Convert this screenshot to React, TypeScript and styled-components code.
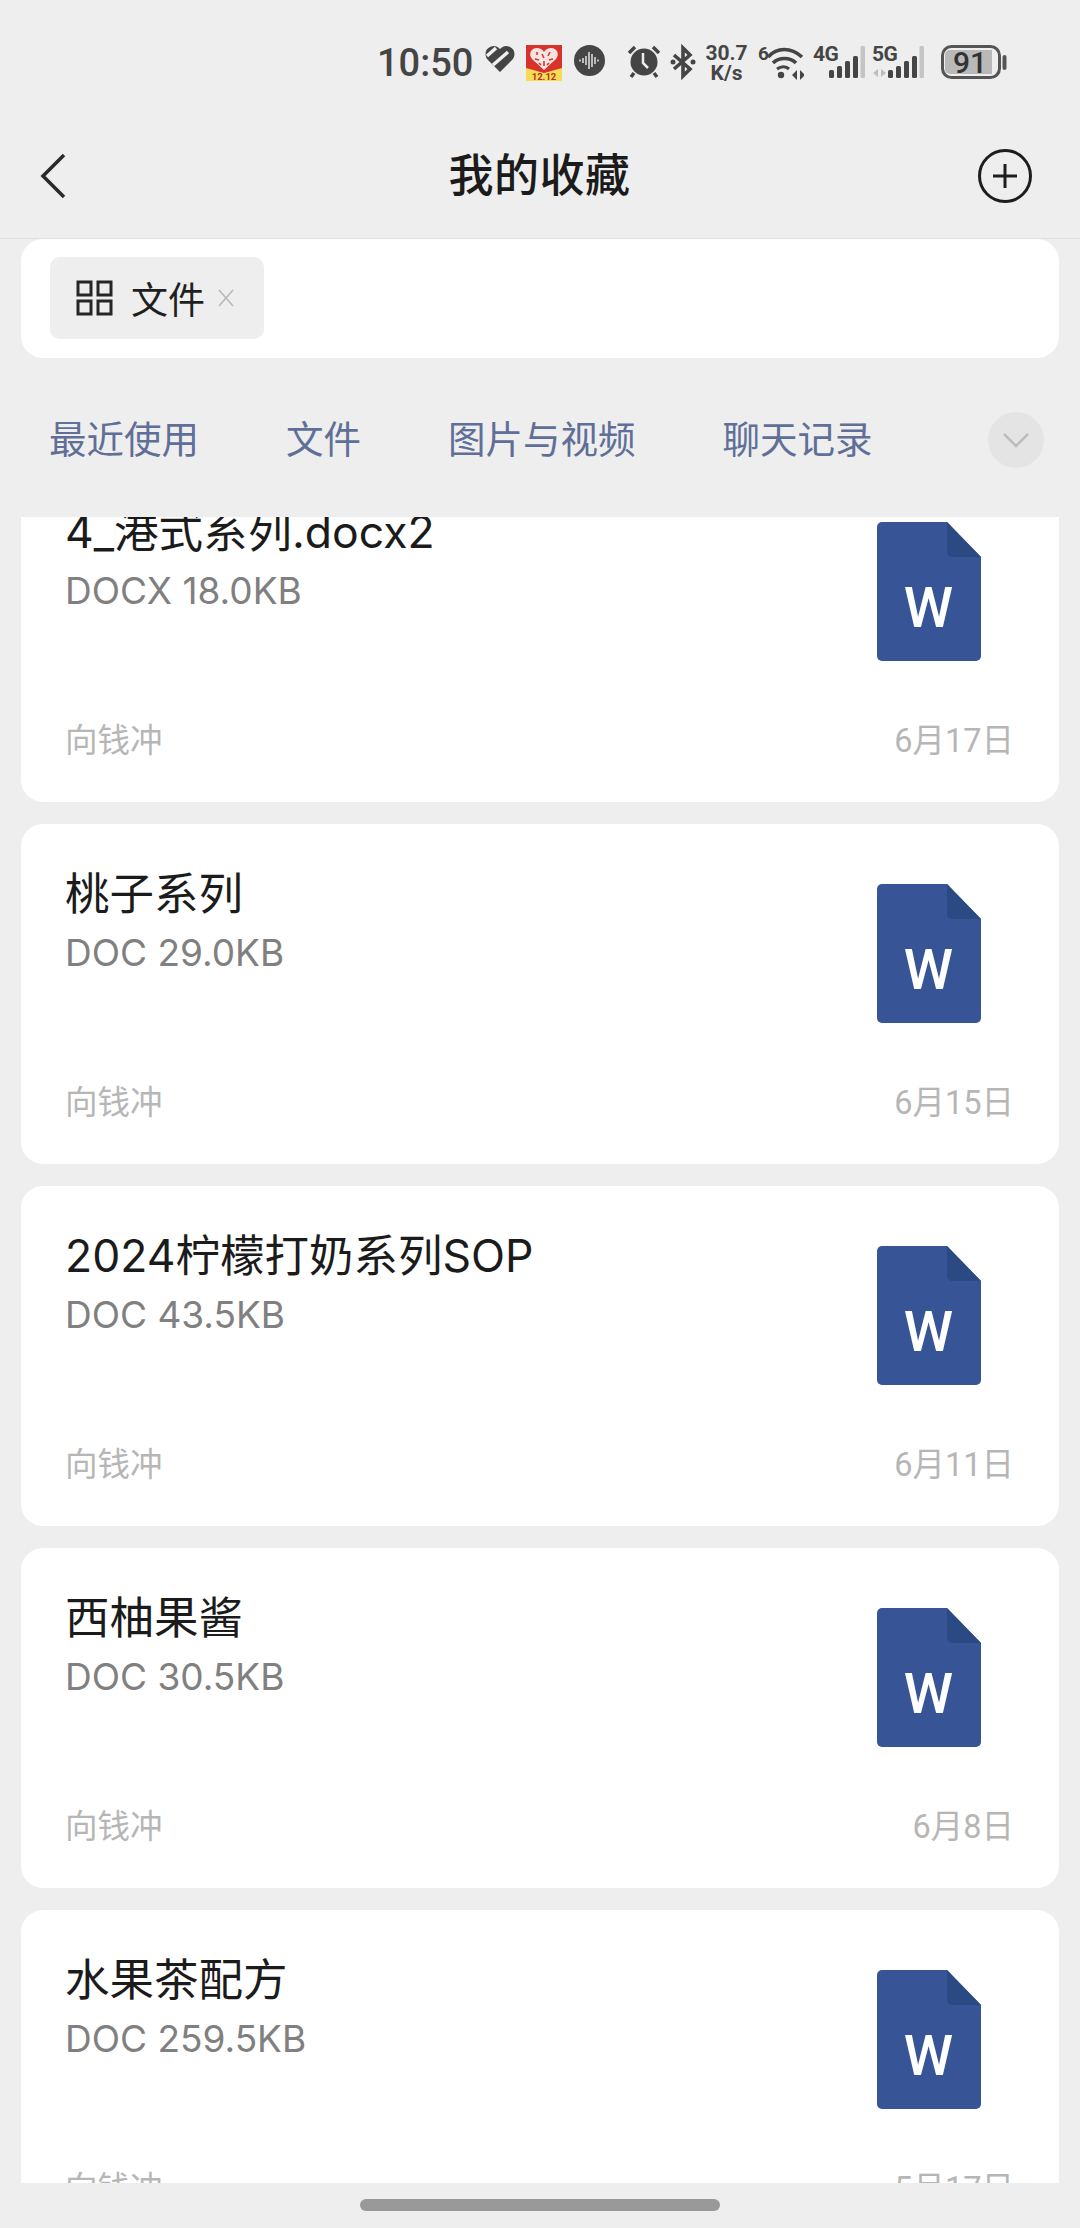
import styled, { createGlobalStyle } from 'styled-components';
import type { ReactNode } from 'react';

const GlobalStyle = createGlobalStyle`
  html, body {
    margin: 0;
    padding: 0;
    background: #eeeeee;
  }
  * {
    box-sizing: border-box;
  }
`;

const FONT = `Roboto, "Noto Sans CJK SC", sans-serif`;
const LIST_FONT = `Inter, "Noto Sans CJK SC", sans-serif`;
const STATUS_INK = '#454545';

const Page = styled.div`
  width: 1080px;
  height: 2228px;
  background: #eeeeee;
  display: flex;
  flex-direction: column;
  overflow: hidden;
  font-family: ${FONT};
`;

const StatusBar = styled.div`
  height: 126px;
  padding: 45px 0 0 377px;
  display: flex;
  align-items: flex-start;
  color: ${STATUS_INK};
`;

const Clock = styled.span`
  width: 97px;
  height: 36px;
  font-size: 38px;
  font-weight: 500;
  line-height: 36px;
  white-space: nowrap;
`;

const Slot = styled.div<{ $left: number }>`
  margin-left: ${props => props.$left}px;
  display: flex;
  flex-shrink: 0;
`;

const StatusSvg = styled.svg`
  margin: -9px 0;
  flex-shrink: 0;
`;

const Speed = styled.div`
  width: 47px;
  margin: -2px 0 0 7px;
  display: flex;
  flex-direction: column;
  align-items: center;
  font-size: 21px;
  font-weight: 700;
  line-height: 20px;
`;

const NavBar = styled.div`
  height: 113px;
  padding: 0 48px 12px 40px;
  display: grid;
  grid-template-columns: 1fr auto 1fr;
  align-items: center;
  border-bottom: 1px solid #e0e0e0;
`;

const NavTitle = styled.h1`
  margin: 0 0 8px 7px;
  font-size: 45px;
  font-weight: 500;
  color: #1b1b1b;
  letter-spacing: 0.5px;
`;

const IconButton = styled.div<{ $end?: boolean }>`
  display: flex;
  justify-content: ${props => (props.$end ? 'flex-end' : 'flex-start')};
`;

const FilterCard = styled.div`
  height: 119px;
  margin: 0 21px;
  padding: 18px 29px;
  background: #ffffff;
  border-radius: 22px;
`;

const Chip = styled.div`
  width: 214px;
  height: 82px;
  padding-left: 26px;
  display: flex;
  align-items: center;
  background: #eeeeee;
  border-radius: 10px;
  color: #1f1f1f;
  font-size: 37px;
`;

const ChipText = styled.span`
  margin-left: 18px;
  margin-right: 13px;
`;

const Tabs = styled.div`
  height: 159px;
  padding: 0 36px 0 49px;
  display: flex;
  align-items: center;
`;

const Tab = styled.span`
  margin: 0 87px 3px 0;
  font-size: 37.5px;
  color: #5f6f98;
  white-space: nowrap;
`;

const MoreButton = styled.div`
  width: 56px;
  height: 56px;
  margin: 5px 0 0 auto;
  border-radius: 50%;
  background: #e4e4e4;
  display: flex;
  align-items: center;
  justify-content: center;
`;

const List = styled.div`
  flex: 1;
  min-height: 0;
  overflow: hidden;
  display: flex;
  flex-direction: column;
  gap: 22px;
  padding: 0 21px;
  font-family: ${LIST_FONT};
`;

const Card = styled.div`
  flex-shrink: 0;
  height: 340px;
  padding: 40px 45px 43px 44px;
  display: flex;
  flex-direction: column;
  background: #ffffff;
  border-radius: 22px;

  &:first-child {
    margin-top: -55px;
  }
`;

const CardTop = styled.div`
  display: flex;
  justify-content: space-between;
  align-items: flex-start;
`;

const CardName = styled.div`
  font-size: 44.5px;
  line-height: 60px;
  color: #1b1b1b;
  white-space: nowrap;
`;

const CardSize = styled.div`
  font-size: 37px;
  line-height: 50px;
  margin-top: 4px;
  color: #808080;
`;

const DocIcon = styled.div`
  margin: 20px 33px 0 0;
  display: flex;
`;

const CardFooter = styled.div`
  margin-top: auto;
  height: 44px;
  display: flex;
  align-items: center;
  justify-content: space-between;
  font-family: ${FONT};
  font-size: 32.5px;
  color: #b6b6b6;
`;

const BottomBar = styled.div`
  height: 45px;
  display: flex;
  justify-content: center;
  padding-top: 16px;
`;

const HomePill = styled.div`
  width: 360px;
  height: 12px;
  border-radius: 6px;
  background: #999999;
`;

const StatusGlyph = ({ w, h, children }: { w: number; h: number; children: ReactNode }) => (
  <StatusSvg width={w} height={h + 18} viewBox={`0 -9 ${w} ${h + 18}`}>
    {children}
  </StatusSvg>
);

const HeartIcon = () => (
  <StatusGlyph w={30} h={28}>
    <path d="M15 27 3 15C-1 11 0 4 5 2c4-2 7-1 10 2 3-3 6-4 10-2 5 2 6 9 2 13z" fill={STATUS_INK} />
    <path d="M2 11 11 3M8 20 23 7" stroke="#eeeeee" strokeWidth="3.5" fill="none" />
  </StatusGlyph>
);

const PromoIcon = () => (
  <StatusGlyph w={36} h={36}>
    <rect width="36" height="36" fill="#f6dc55" />
    <path d="M0 0h36v23L18 28 0 23z" fill="#d8322c" />
    <path d="M18 25 6 14C2 9 5 3 11 3c3 0 5 1 7 4 2-3 4-4 7-4 6 0 9 6 5 11z" fill="#f7e4e0" />
    <path d="M11 7v3M16 9l2 4M24 7l-2 4M9 14l4 1M27 14l-4 1M18 16v5M13 18l2 2M23 18l-2 2" stroke="#d8322c" strokeWidth="1.6" />
    <text x="18" y="35" textAnchor="middle" fontSize="9.5" fontWeight="700" fontFamily="Roboto, sans-serif" fill="#b5301f">12.12</text>
  </StatusGlyph>
);

const VoiceIcon = () => (
  <StatusGlyph w={31} h={31}>
    <circle cx="15.5" cy="15.5" r="15.5" fill={STATUS_INK} />
    <path d="M6 14.5v2M9 13v5M12 11v9M15 7v17M18 9v13M21 12v7M24 14.5v2" stroke="#eeeeee" strokeWidth="1.4" />
  </StatusGlyph>
);

const AlarmIcon = () => (
  <StatusGlyph w={34} h={33}>
    <circle cx="17" cy="17" r="13.5" fill={STATUS_INK} />
    <path d="M2 8 8 2M32 8 26 2M7 28l-3 4M27 28l3 4" stroke={STATUS_INK} strokeWidth="3.5" fill="none" />
    <path d="M16 8v10l5 5" stroke="#eeeeee" strokeWidth="2.5" fill="none" />
  </StatusGlyph>
);

const BluetoothIcon = () => (
  <StatusGlyph w={26} h={34}>
    <path d="M4 10 20 24 13 31V3l7 7L4 24" stroke={STATUS_INK} strokeWidth="3.6" fill="none" />
    <circle cx="3" cy="17" r="2.5" fill={STATUS_INK} />
    <circle cx="23" cy="17" r="2.5" fill={STATUS_INK} />
  </StatusGlyph>
);

const WifiIcon = () => (
  <StatusGlyph w={46} h={34}>
    <text x="0" y="15" fontSize="19" fontWeight="700" fontFamily="Roboto, sans-serif" fill={STATUS_INK}>6</text>
    <path d="M10 12C19 2 33 2 44 12M15 18c6-6 17-6 23 0" stroke={STATUS_INK} strokeWidth="3.6" fill="none" />
    <path d="M19 24c4-3 9-3 12 0" stroke={STATUS_INK} strokeWidth="3.2" fill="none" />
    <circle cx="23" cy="30" r="3.2" fill={STATUS_INK} />
    <path d="M34 30l5-5v10zM42 25l5 5-5 5z" fill={STATUS_INK} />
  </StatusGlyph>
);

const SignalIcon = ({ label, arrows }: { label: string; arrows?: boolean }) => (
  <StatusGlyph w={53} h={34}>
    <text x="0" y="16" fontSize="21" fontWeight="700" fontFamily="Roboto, sans-serif" letterSpacing="-0.5" fill={STATUS_INK}>{label}</text>
    {arrows && <path d="M1 28l5-4v8zM9 24l5 4-5 4z" fill="#bdbdbd" />}
    <rect x="16" y="25" width="5" height="8" rx="1.5" fill={STATUS_INK} />
    <rect x="24" y="21" width="5" height="12" rx="1.5" fill={STATUS_INK} />
    <rect x="32" y="16" width="5" height="17" rx="1.5" fill={STATUS_INK} />
    <rect x="40" y="11" width="5" height="22" rx="1.5" fill={STATUS_INK} />
    <rect x="47.5" y="1" width="4.5" height="32" rx="1.5" fill="#c4c4c4" />
  </StatusGlyph>
);

const BatteryIcon = () => (
  <StatusGlyph w={66} h={34}>
    <rect x="1.5" y="1.5" width="57" height="31" rx="9" fill="none" stroke="#555555" strokeWidth="3" />
    <path d="M9 5h42v24H9a5 5 0 0 1-5-5V10a5 5 0 0 1 5-5z" fill="#b9b9b9" />
    <text x="29" y="28" textAnchor="middle" fontSize="30" fontWeight="500" fontFamily="Roboto, sans-serif" fill="#333333">91</text>
    <rect x="61.5" y="10" width="4" height="15" rx="2" fill="#555555" />
  </StatusGlyph>
);

const BackIcon = () => (
  <svg width="26" height="46" viewBox="0 0 26 46">
    <path d="M24 2 3 23l21 21" stroke="#2a2a2a" strokeWidth="3.5" fill="none" />
  </svg>
);

const PlusIcon = () => (
  <svg width="54" height="54" viewBox="0 0 54 54">
    <circle cx="27" cy="27" r="25.5" stroke="#1d1d1d" strokeWidth="3" fill="none" />
    <path d="M27 15v24M15 27h24" stroke="#1d1d1d" strokeWidth="3" fill="none" />
  </svg>
);

const GridIcon = () => (
  <svg width="37" height="36" viewBox="0 0 37 36">
    <path d="M2 2h13v13H2zM22 2h13v13H22zM2 21h13v13H2zM22 21h13v13H22z" stroke="#262626" strokeWidth="3" fill="none" />
  </svg>
);

const CloseIcon = () => (
  <svg width="16" height="18" viewBox="0 0 16 18">
    <path d="M1 1l14 16M15 1 1 17" stroke="#b8b8b8" strokeWidth="1.6" fill="none" />
  </svg>
);

const ChevronDownIcon = () => (
  <svg width="28" height="16" viewBox="0 0 28 16">
    <path d="M2 2l12 12L26 2" stroke="#bdbdbd" strokeWidth="2.5" fill="none" />
  </svg>
);

const WordIcon = () => (
  <svg width="104" height="139" viewBox="0 0 104 139">
    <path d="M5 0h65l34 35v99a5 5 0 0 1-5 5H5a5 5 0 0 1-5-5V5a5 5 0 0 1 5-5z" fill="#375596" />
    <path d="M70 0l34 35H75a5 5 0 0 1-5-5z" fill="#2b4a83" />
    <text x="51.5" y="105" textAnchor="middle" fontSize="56" fontWeight="500" fontFamily="Roboto, sans-serif" fill="#ffffff">W</text>
  </svg>
);

const files = [
  { name: '4_港式系列.docx2', size: 'DOCX 18.0KB', date: '6月17日' },
  { name: '桃子系列', size: 'DOC 29.0KB', date: '6月15日' },
  { name: '2024柠檬打奶系列SOP', size: 'DOC 43.5KB', date: '6月11日' },
  { name: '西柚果酱', size: 'DOC 30.5KB', date: '6月8日' },
  { name: '水果茶配方', size: 'DOC 259.5KB', date: '5月17日' },
];

const tabs = ['最近使用', '文件', '图片与视频', '聊天记录'];

const App = () => {
  return (
    <>
      <GlobalStyle />
      <Page>
        <StatusBar>
          <Clock>10:50</Clock>
          <Slot $left={11}><HeartIcon /></Slot>
          <Slot $left={11}><PromoIcon /></Slot>
          <Slot $left={12}><VoiceIcon /></Slot>
          <Slot $left={22}><AlarmIcon /></Slot>
          <Slot $left={9}><BluetoothIcon /></Slot>
          <Speed>
            <span>30.7</span>
            <span>K/s</span>
          </Speed>
          <Slot $left={8}><WifiIcon /></Slot>
          <Slot $left={9}><SignalIcon label="4G" /></Slot>
          <Slot $left={6}><SignalIcon label="5G" arrows /></Slot>
          <Slot $left={16}><BatteryIcon /></Slot>
        </StatusBar>
        <NavBar>
          <IconButton><BackIcon /></IconButton>
          <NavTitle>我的收藏</NavTitle>
          <IconButton $end><PlusIcon /></IconButton>
        </NavBar>
        <FilterCard>
          <Chip>
            <GridIcon />
            <ChipText>文件</ChipText>
            <CloseIcon />
          </Chip>
        </FilterCard>
        <Tabs>
          {tabs.map(tab => <Tab key={tab}>{tab}</Tab>)}
          <MoreButton><ChevronDownIcon /></MoreButton>
        </Tabs>
        <List>
          {files.map(file => (
            <Card key={file.name}>
              <CardTop>
                <div>
                  <CardName>{file.name}</CardName>
                  <CardSize>{file.size}</CardSize>
                </div>
                <DocIcon><WordIcon /></DocIcon>
              </CardTop>
              <CardFooter>
                <span>向钱冲</span>
                <span>{file.date}</span>
              </CardFooter>
            </Card>
          ))}
        </List>
        <BottomBar><HomePill /></BottomBar>
      </Page>
    </>
  );
};

export default App;
